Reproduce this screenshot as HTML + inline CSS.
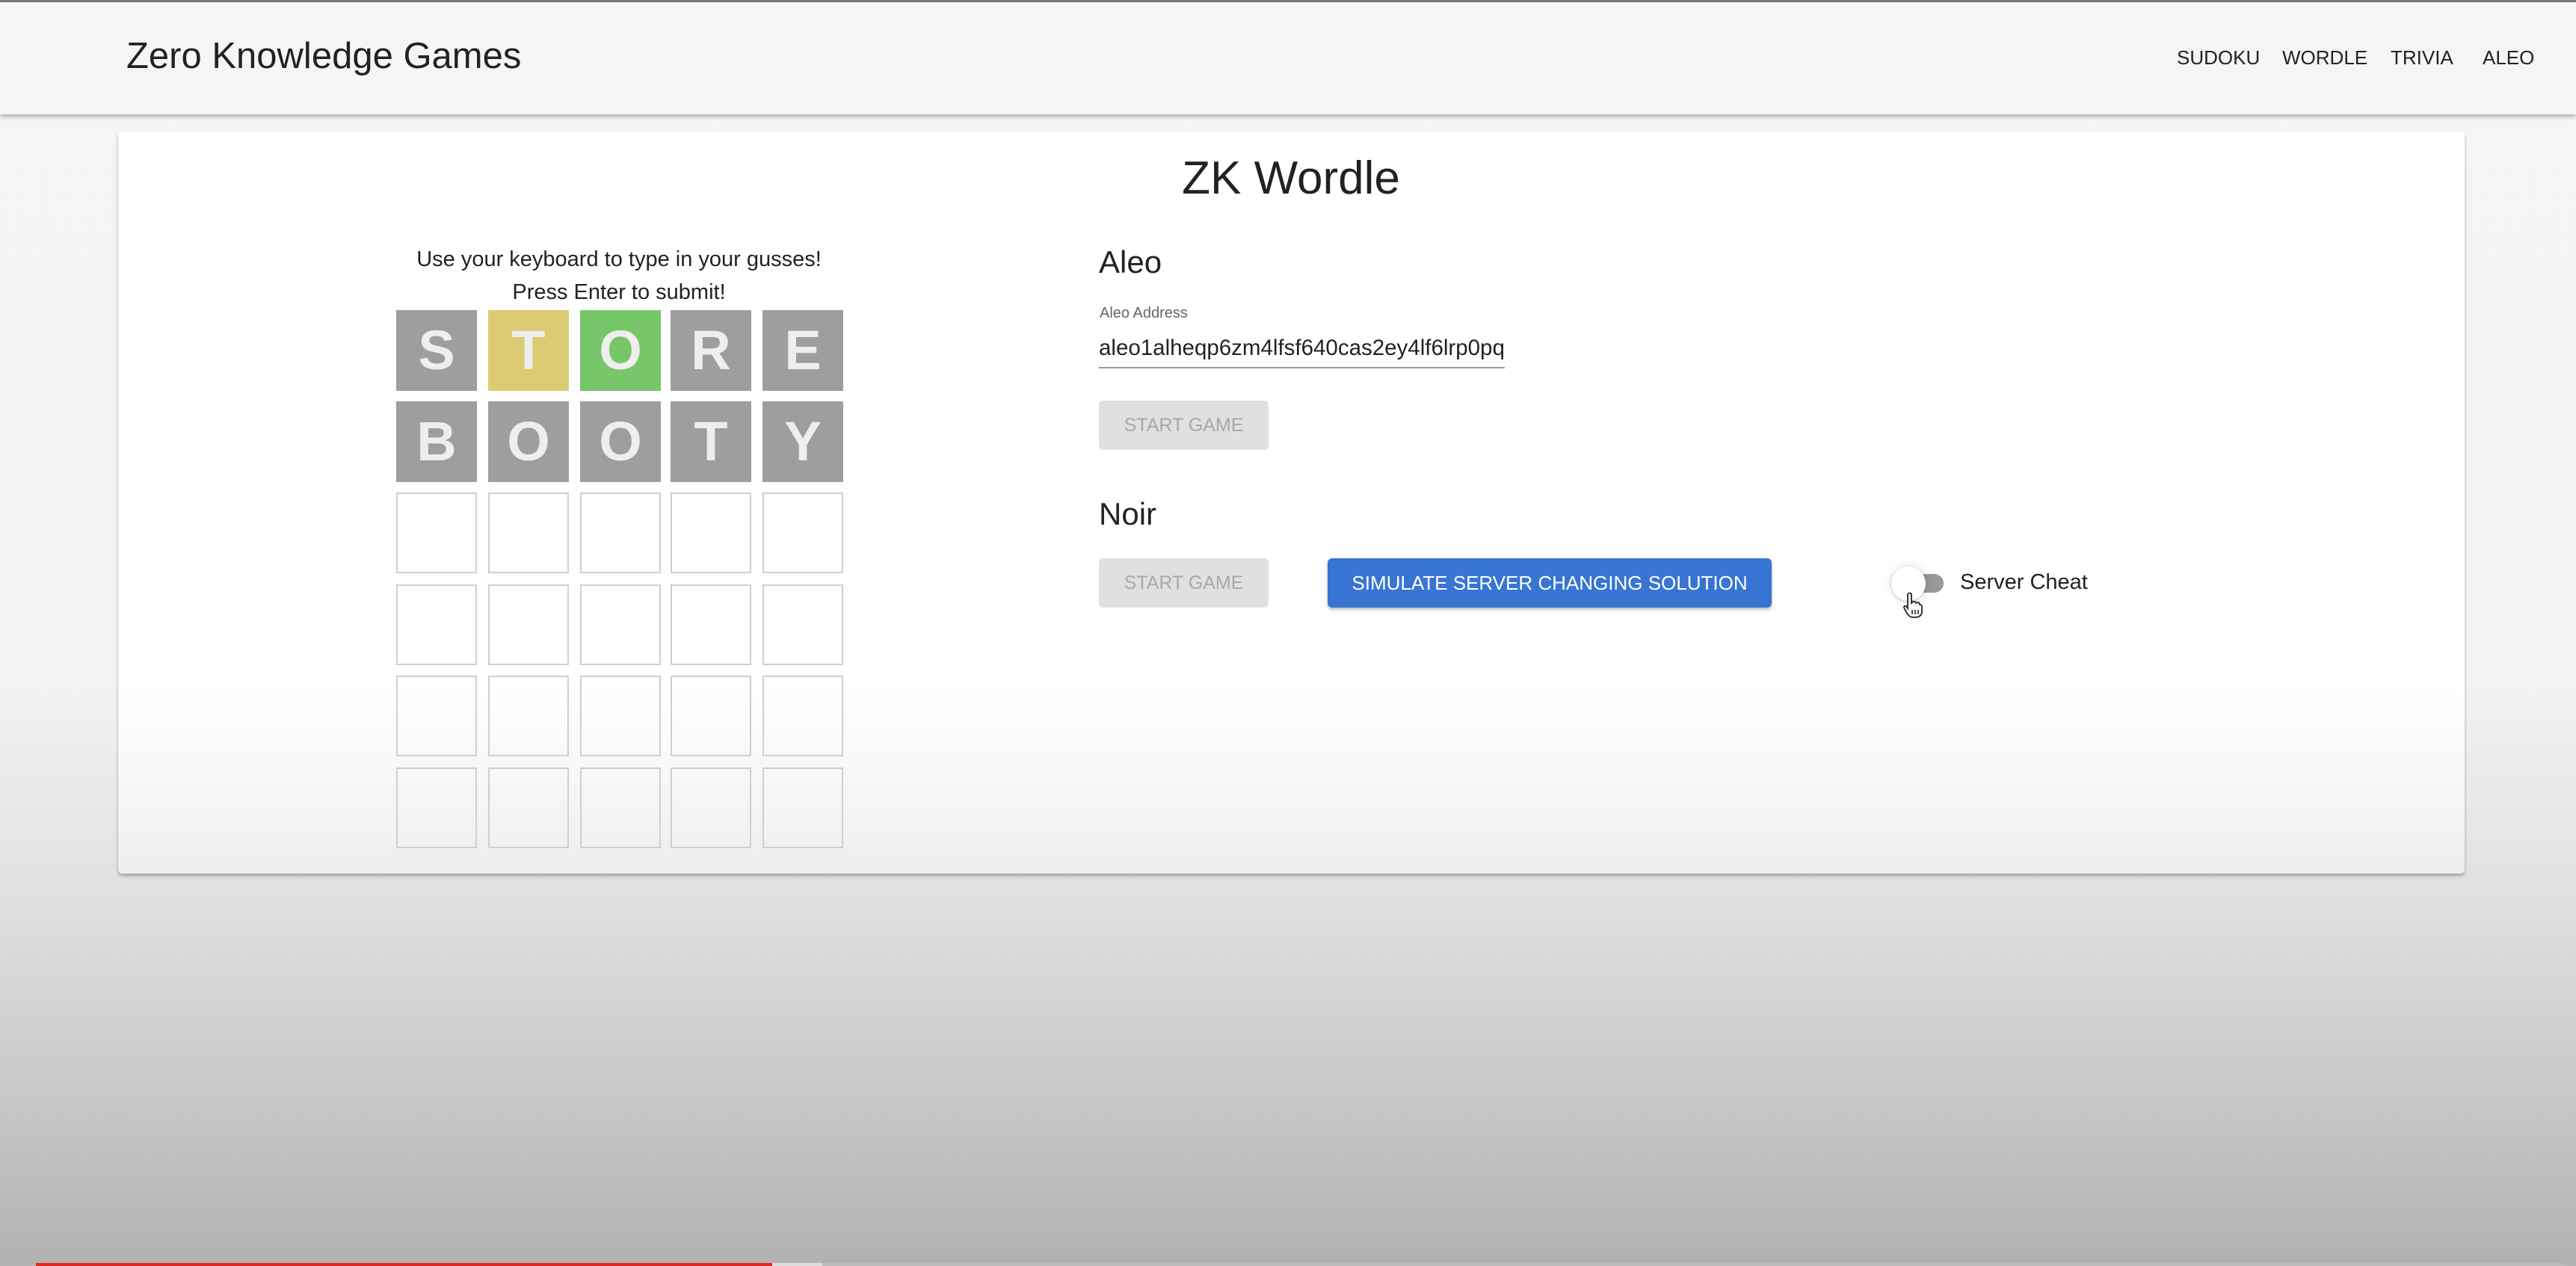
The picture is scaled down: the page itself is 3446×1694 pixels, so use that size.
<!DOCTYPE html>
<html><head><meta charset="utf-8"><style>
*{margin:0;padding:0;box-sizing:border-box}
html,body{width:3446px;height:1694px;overflow:hidden}
body{position:relative;font-family:"Liberation Sans",Arial,sans-serif;color:#222;
background:linear-gradient(to bottom,#f5f5f5 0px,#f3f3f3 900px,#e0e0e0 1200px,#c9c9c9 1450px,#b1b1b1 1694px)}
.a{position:absolute;white-space:nowrap}
.hdr{position:absolute;left:0;top:0;width:3446px;height:153px;background:#f5f5f5;border-top:3px solid #777;box-shadow:0 3px 6px rgba(0,0,0,.3)}
.card{position:absolute;left:158px;top:176px;width:3139px;height:993px;border-radius:6px;
background:linear-gradient(to bottom,#fff 0,#fff 740px,#f6f6f6 880px,#ededed 993px);box-shadow:0 3px 4px rgba(0,0,0,.3)}
.t{position:absolute;width:108px;height:108px;font-weight:bold;font-size:74px;color:#eee;text-align:center;line-height:108px}
.e{border:2px solid #cfcfcf;background:transparent}
.g{background:#9e9e9e}.y{background:#dccb73}.gr{background:#77c66a}
.btn{position:absolute;border-radius:6px;font-size:25px;text-align:center}
.dis{background:#e0e0e0;color:#a8a8a8;width:227px;height:66px;line-height:66px}
</style></head><body>
<div class="hdr"></div>
<div class="a" style="left:169px;top:47px;font-size:49px;color:#222">Zero Knowledge Games</div>
<div class="a" style="left:2912px;top:62px;font-size:26px">SUDOKU</div>
<div class="a" style="left:3053px;top:62px;font-size:26px">WORDLE</div>
<div class="a" style="left:3198px;top:62px;font-size:26px">TRIVIA</div>
<div class="a" style="left:3321px;top:62px;font-size:26px">ALEO</div>
<div class="card"></div>
<div class="a" style="left:0;width:3454px;text-align:center;top:203px;font-size:62px">ZK Wordle</div>
<div class="a" style="left:528px;width:600px;text-align:center;top:325px;font-size:29px;line-height:44px">Use your keyboard to type in your gusses!<br>Press Enter to submit!</div>

<div class="t g" style="left:530px;top:415px">S</div>
<div class="t y" style="left:653px;top:415px">T</div>
<div class="t gr" style="left:776px;top:415px">O</div>
<div class="t g" style="left:897px;top:415px">R</div>
<div class="t g" style="left:1020px;top:415px">E</div>
<div class="t g" style="left:530px;top:537px">B</div>
<div class="t g" style="left:653px;top:537px">O</div>
<div class="t g" style="left:776px;top:537px">O</div>
<div class="t g" style="left:897px;top:537px">T</div>
<div class="t g" style="left:1020px;top:537px">Y</div>
<div class="t e" style="left:530px;top:659px"></div><div class="t e" style="left:653px;top:659px"></div><div class="t e" style="left:776px;top:659px"></div><div class="t e" style="left:897px;top:659px"></div><div class="t e" style="left:1020px;top:659px"></div>
<div class="t e" style="left:530px;top:782px"></div><div class="t e" style="left:653px;top:782px"></div><div class="t e" style="left:776px;top:782px"></div><div class="t e" style="left:897px;top:782px"></div><div class="t e" style="left:1020px;top:782px"></div>
<div class="t e" style="left:530px;top:904px"></div><div class="t e" style="left:653px;top:904px"></div><div class="t e" style="left:776px;top:904px"></div><div class="t e" style="left:897px;top:904px"></div><div class="t e" style="left:1020px;top:904px"></div>
<div class="t e" style="left:530px;top:1027px"></div><div class="t e" style="left:653px;top:1027px"></div><div class="t e" style="left:776px;top:1027px"></div><div class="t e" style="left:897px;top:1027px"></div><div class="t e" style="left:1020px;top:1027px"></div>

<div class="a" style="left:1470px;top:327px;font-size:42px">Aleo</div>
<div class="a" style="left:1471px;top:408px;font-size:20px;color:#666">Aleo Address</div>
<div class="a" style="left:1470px;top:449px;font-size:29.5px;color:#222">aleo1alheqp6zm4lfsf640cas2ey4lf6lrp0pq</div>
<div class="a" style="left:1470px;top:491px;width:543px;height:2px;background:#999"></div>
<div class="btn dis" style="left:1470px;top:536px">START GAME</div>
<div class="a" style="left:1470px;top:664px;font-size:42px">Noir</div>
<div class="btn dis" style="left:1470px;top:747px">START GAME</div>
<div class="btn" style="left:1776px;top:747px;width:594px;height:66px;line-height:66px;background:#3875d3;color:#fff;font-size:26px;box-shadow:0 3px 4px rgba(0,0,0,.25)">SIMULATE SERVER CHANGING SOLUTION</div>
<div class="a" style="left:2530px;top:768px;width:70px;height:25px;border-radius:13px;background:#999"></div>
<div class="a" style="left:2530px;top:758px;width:46px;height:46px;border-radius:50%;background:#fff;box-shadow:0 0 14px rgba(0,0,0,.12),0 1px 3px rgba(0,0,0,.2)"></div>
<svg class="a" style="left:2546px;top:792px" width="26" height="36" viewBox="0 0 26 36"><path d="M6 3 Q9 0 11 3 V15 L13 13 Q16 12 17 15 L19 14 Q22 14 22 17 Q25 17 25 20 V27 Q24 34 16 34 H12 Q7 33 4 27 L1 21 Q1 18 4 19 L6 22 Z" fill="#fff" stroke="#222" stroke-width="1.8"/><path d="M12 24v6M16 24v6M20 24v6" stroke="#222" stroke-width="1.5"/></svg>
<div class="a" style="left:2622px;top:763px;font-size:29px;color:#222">Server Cheat</div>
<div class="a" style="left:48px;top:1690px;width:985px;height:4px;background:#e0281c"></div>
<div class="a" style="left:1033px;top:1690px;width:67px;height:4px;background:#ddd"></div>
<div class="a" style="left:1100px;top:1690px;width:2330px;height:4px;background:#bbb"></div>
</body></html>
